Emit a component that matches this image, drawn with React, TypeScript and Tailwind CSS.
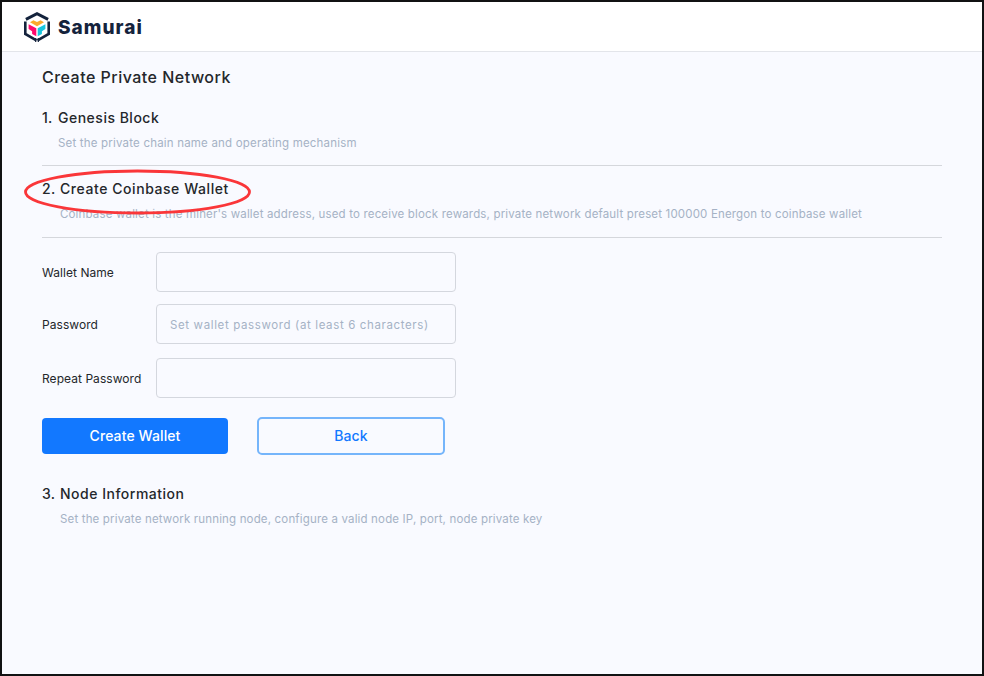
import React from "react";

function LogoMark() {
  return (
    <svg className="h-[30px] w-[26px] shrink-0" viewBox="0 0 26 30" fill="none">
      <path d="M1.900 7.400 13 1.700l11.100 5.700" stroke="#14233c" strokeWidth="2.900" />
      <path d="M1.300 9.600V22L12.400 28.300" stroke="#14233c" strokeWidth="2.600" />
      <path d="M24.700 9.600V22L13.600 28.300" stroke="#14233c" strokeWidth="2.600" />
      <path d="M11.700 26V30M14.300 26V30" stroke="#14233c" strokeWidth="1.200" />
      <path d="M6 10.200 9.400 8.300 13 10.100 16.600 8.300 20 10.200 13 14.300z" fill="#fbaa2c" />
      <path d="M4.600 12.200 12.300 16.300V24.300L8.100 22.100V19.200L4.600 17.100z" fill="#ff0a6c" />
      <path d="M21.400 12.200 13.700 16.300V24.300L17.900 22.100V19.200L21.400 17.100z" fill="#18c5de" />
    </svg>
  );
}

interface StepProps {
  number: string;
  title: string;
  description: string;
  indent: string;
  tracking: string;
  descTracking: string;
}

function Step({ number, title, description, indent, tracking, descTracking }: StepProps) {
  return (
    <div className="flex">
      <span className={`shrink-0 text-sm leading-5 font-medium tracking-[0.3px] ${indent}`}>{number}</span>
      <div>
        <h2 className={`text-sm leading-5 font-medium whitespace-nowrap ${tracking}`}>{title}</h2>
        <p className={`mt-1.5 text-[11.5px] leading-[18px] whitespace-nowrap text-[#a5b2c5] ${descTracking}`}>{description}</p>
      </div>
    </div>
  );
}

interface FieldProps {
  label: string;
  placeholder?: string;
}

function Field({ label, placeholder }: FieldProps) {
  return (
    <label className="flex h-10 items-center">
      <span className="w-[114px] shrink-0 pt-0.5 text-xs leading-[18px] tracking-[0.05px] whitespace-nowrap">{label}</span>
      <input
        className="h-10 w-[300px] rounded-[4px] border border-[#d4d7de] bg-transparent px-[13px] pt-0.5 text-[11.5px] tracking-[0.63px] outline-none placeholder:text-[#a5b2c5]"
        placeholder={placeholder}
      />
    </label>
  );
}

export default function App() {
  return (
    <div className="flex h-[676px] w-[984px] flex-col overflow-hidden border-2 border-[#111213] bg-[#f9faff] font-['Inter','Liberation_Sans',sans-serif] text-[#24272b]">
      <header className="flex h-[50px] shrink-0 items-center gap-2 border-b border-[#e3e5ea] bg-white pl-[22px]">
        <LogoMark />
        <span className="pt-0.5 text-[19px] leading-6 font-extrabold tracking-[1.05px] text-[#14233c]">Samurai</span>
      </header>
      <main className="w-[940px] pl-10">
        <h1 className="mt-[13px] text-base leading-6 font-medium tracking-[0.48px]">Create Private Network</h1>
        <section className="mt-[19px] h-[58px] border-b border-[#d5d7dc]">
          <Step number="1." title="Genesis Block" description="Set the private chain name and operating mechanism" indent="w-4" tracking="tracking-[0.5px]" descTracking="tracking-[0.19px]" />
        </section>
        <section className="relative mt-[13px] h-[59px] border-b border-[#d5d7dc]">
          <Step number="2." title="Create Coinbase Wallet" description="Coinbase wallet is the miner's wallet address, used to receive block rewards, private network default preset 100000 Energon to coinbase wallet" indent="w-[18px]" tracking="tracking-[0.56px]" descTracking="tracking-[0.163px]" />
          <svg className="pointer-events-none absolute -top-2.5 -left-[19px] h-[46px] w-[230px]" viewBox="0 0 230 46" fill="none">
            <ellipse cx="114.500" cy="23" rx="112" ry="21" stroke="#fa3639" strokeWidth="2.800" />
          </svg>
        </section>
        <form className="mt-3.5 flex flex-col" onSubmit={(event) => event.preventDefault()}>
          <Field label="Wallet Name" />
          <div className="mt-3">
            <Field label="Password" placeholder="Set wallet password (at least 6 characters)" />
          </div>
          <div className="mt-3.5">
            <Field label="Repeat Password" />
          </div>
          <div className="mt-[19px] flex items-center gap-[29px]">
            <button className="h-9 w-[186px] rounded-[4px] bg-[#1278ff] text-sm font-medium tracking-[0.1px] text-white">Create Wallet</button>
            <button className="h-[38px] w-[188px] rounded-[5px] border-2 border-[#75b5fb] text-sm font-medium tracking-[0.1px] text-[#1278ff]">Back</button>
          </div>
        </form>
        <section className="mt-[29px]">
          <Step number="3." title="Node Information" description="Set the private network running node, configure a valid node IP, port, node private key" indent="w-[18px]" tracking="tracking-[0.5px]" descTracking="tracking-[0.16px]" />
        </section>
      </main>
    </div>
  );
}
